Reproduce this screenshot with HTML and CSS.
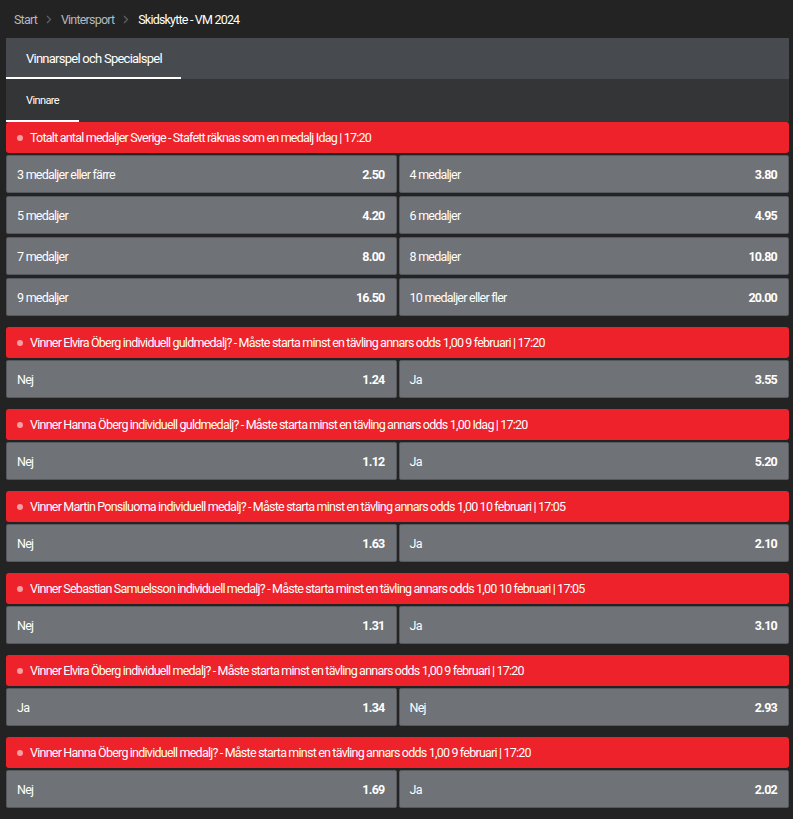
FILE: index.html
```html
<!DOCTYPE html>
<html lang="sv">

<head>
    <meta charset="UTF-8">
    <meta name="viewport" content="width=device-width, initial-scale=1.0">
    <title>Skidskytte - VM 2024</title>

    <link rel="stylesheet" href="styles.css">
</head>

<body>

    <div class="breadcrumb">
        <span class="crumb">Start</span>
        <svg class="sep" width="6" height="9" viewBox="0 0 6 9"><path d="M1 1l3.5 3.5L1 8" fill="none" stroke="#5e6064" stroke-width="1.3"/></svg>
        <span class="crumb">Vintersport</span>
        <svg class="sep" width="6" height="9" viewBox="0 0 6 9"><path d="M1 1l3.5 3.5L1 8" fill="none" stroke="#5e6064" stroke-width="1.3"/></svg>
        <span class="crumb current">Skidskytte - VM 2024</span>
    </div>

    <div class="tabs">
        <div class="tabRow">
            <div class="tab active">Vinnarspel och Specialspel</div>
        </div>
        <div class="subRow">
            <div class="subTab active">Vinnare</div>
        </div>
    </div>

    <div class="market">
        <div class="marketHead"><span class="dot"></span>Totalt antal medaljer Sverige - Stafett räknas som en medalj Idag | 17:20</div>
        <div class="grid">
            <div class="cell"><span>3 medaljer eller färre</span><span class="odds">2.50</span></div>
            <div class="cell"><span>4 medaljer</span><span class="odds">3.80</span></div>
            <div class="cell"><span>5 medaljer</span><span class="odds">4.20</span></div>
            <div class="cell"><span>6 medaljer</span><span class="odds">4.95</span></div>
            <div class="cell"><span>7 medaljer</span><span class="odds">8.00</span></div>
            <div class="cell"><span>8 medaljer</span><span class="odds">10.80</span></div>
            <div class="cell"><span>9 medaljer</span><span class="odds">16.50</span></div>
            <div class="cell"><span>10 medaljer eller fler</span><span class="odds">20.00</span></div>
        </div>
    </div>

    <div class="market">
        <div class="marketHead"><span class="dot"></span>Vinner Elvira Öberg individuell guldmedalj? - Måste starta minst en tävling annars odds 1,00 9 februari | 17:20</div>
        <div class="grid">
            <div class="cell"><span>Nej</span><span class="odds">1.24</span></div>
            <div class="cell"><span>Ja</span><span class="odds">3.55</span></div>
        </div>
    </div>

    <div class="market">
        <div class="marketHead"><span class="dot"></span>Vinner Hanna Öberg individuell guldmedalj? - Måste starta minst en tävling annars odds 1,00 Idag | 17:20</div>
        <div class="grid">
            <div class="cell"><span>Nej</span><span class="odds">1.12</span></div>
            <div class="cell"><span>Ja</span><span class="odds">5.20</span></div>
        </div>
    </div>

    <div class="market">
        <div class="marketHead"><span class="dot"></span>Vinner Martin Ponsiluoma individuell medalj? - Måste starta minst en tävling annars odds 1,00 10 februari | 17:05</div>
        <div class="grid">
            <div class="cell"><span>Nej</span><span class="odds">1.63</span></div>
            <div class="cell"><span>Ja</span><span class="odds">2.10</span></div>
        </div>
    </div>

    <div class="market">
        <div class="marketHead"><span class="dot"></span>Vinner Sebastian Samuelsson individuell medalj? - Måste starta minst en tävling annars odds 1,00 10 februari | 17:05</div>
        <div class="grid">
            <div class="cell"><span>Nej</span><span class="odds">1.31</span></div>
            <div class="cell"><span>Ja</span><span class="odds">3.10</span></div>
        </div>
    </div>

    <div class="market">
        <div class="marketHead"><span class="dot"></span>Vinner Elvira Öberg individuell medalj? - Måste starta minst en tävling annars odds 1,00 9 februari | 17:20</div>
        <div class="grid">
            <div class="cell"><span>Ja</span><span class="odds">1.34</span></div>
            <div class="cell"><span>Nej</span><span class="odds">2.93</span></div>
        </div>
    </div>

    <div class="market">
        <div class="marketHead"><span class="dot"></span>Vinner Hanna Öberg individuell medalj? - Måste starta minst en tävling annars odds 1,00 9 februari | 17:20</div>
        <div class="grid">
            <div class="cell"><span>Nej</span><span class="odds">1.69</span></div>
            <div class="cell"><span>Ja</span><span class="odds">2.02</span></div>
        </div>
    </div>

</body>

</html>
```

FILE: styles.css
```css
body {
    margin: 0;
    padding: 0 4px 0 6px;
    background: #232323;
    color: #fff;
    font-family: Roboto, "Liberation Sans", sans-serif;
    font-size: 12.5px;
    letter-spacing: -0.75px;
}

.breadcrumb {
    height: 38px;
    display: flex;
    align-items: center;
    gap: 9px;
    padding-left: 8px;
    font-size: 12.5px;
    letter-spacing: -0.8px;
}

.crumb {
    color: #b2b8c0;
}

.crumb.current {
    color: #fff;
}

.tabRow {
    height: 41px;
    background: #474b4f;
    display: flex;
}

.tab {
    width: 175px;
    box-sizing: border-box;
    padding-left: 20px;
    display: flex;
    align-items: center;
    white-space: nowrap;
    font-size: 13px;
    letter-spacing: -0.75px;
    border-bottom: 2px solid #fff;
    margin-top: 2px;
}

.subRow {
    height: 43px;
    background: #333537;
    display: flex;
}

.subTab {
    width: 73px;
    box-sizing: border-box;
    padding-left: 20px;
    display: flex;
    align-items: center;
    font-size: 11px;
    letter-spacing: -0.6px;
    border-bottom: 2px solid #fff;
    margin-top: 2px;
}

.market {
    margin-bottom: 11px;
}

.marketHead {
    height: 31px;
    background: #ed222a;
    border-radius: 3px;
    display: flex;
    align-items: center;
    padding-left: 11px;
    margin-bottom: 2px;
    white-space: nowrap;
    word-spacing: -0.2px;
}

.dot {
    width: 6px;
    height: 6px;
    border-radius: 50%;
    background: #f79ea1;
    margin-right: 7px;
}

.grid {
    display: grid;
    grid-template-columns: 1fr 1fr;
    gap: 3px 2px;
}

.cell {
    height: 36px;
    background: #6f7276;
    border: 1px solid #55585c;
    border-radius: 2px;
    display: flex;
    justify-content: space-between;
    align-items: center;
    padding: 0 11px 0 10px;
}

.odds {
    font-weight: bold;
}
```
